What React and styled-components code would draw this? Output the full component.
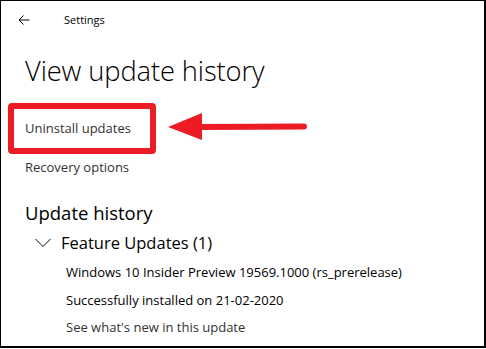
import React from "react";
import styled, { createGlobalStyle } from "styled-components";

const Global = createGlobalStyle`
  html, body { margin: 0; padding: 0; background: #fff; }
  body { font-family: "Open Sans", "Noto Sans", sans-serif; color: #000; }
`;

const Frame = styled.div`
  box-sizing: border-box;
  width: 486px;
  height: 348px;
  border: 1px solid #000;
  border-right-width: 2px;
  border-bottom-width: 2px;
  background: #fff;
  overflow: hidden;
`;

const Header = styled.div`
  height: 37px;
  display: flex;
  align-items: center;
  padding-left: 17px;
  gap: 34px;
`;

const HeaderTitle = styled.span`
  font-size: 11px;
  color: #000;
  line-height: 16px;
`;

const Content = styled.div`
  padding-left: 24px;
  display: flex;
  flex-direction: column;
`;

const Title = styled.h1`
  margin: 14px 0 0;
  font-size: 27.3px;
  font-weight: 300;
  line-height: 37px;
  letter-spacing: -0.1px;
`;

const LinkText = styled.div`
  position: relative;
  font-size: 13px;
  line-height: 20px;
  color: #333;
  margin-top: ${(p) => p.$gap}px;
  align-self: flex-start;
`;

const Highlight = styled.div`
  position: absolute;
  box-sizing: border-box;
  left: -17px;
  top: -15px;
  width: 148px;
  height: 51px;
  border: 6px solid #ed1c24;
  border-radius: 4px;
`;

const Pointer = styled.svg`
  position: absolute;
  left: 141px;
  top: -7px;
`;

const Section = styled.h2`
  margin: 23px 0 0;
  font-size: 18.5px;
  font-weight: 400;
  line-height: 26px;
`;

const Group = styled.div`
  margin-top: 6px;
  display: flex;
  align-items: center;
  gap: 10px;
  padding-left: 10px;
  font-size: 16.5px;
  line-height: 22px;
`;

const Item = styled.div`
  padding-left: 41px;
  font-size: 13px;
  line-height: 20px;
  margin-top: ${(p) => p.$gap}px;
  color: ${(p) => (p.$muted ? "#333" : "#000")};
`;

const BackArrow = () => (
  <svg width="12" height="10" viewBox="0 0 12 10">
    <path d="M5.5 0.5 L1 5 L5.5 9.5 M1 5 H11.5" fill="none" stroke="#000" strokeWidth="1" />
  </svg>
);

const Chevron = () => (
  <svg width="16" height="10" viewBox="0 0 16 10">
    <path d="M0.5 1 L8 8.5 L15.5 1" fill="none" stroke="#000" strokeWidth="1" />
  </svg>
);

export default function App() {
  return (
    <>
      <Global />
      <Frame>
        <Header>
          <BackArrow />
          <HeaderTitle>Settings</HeaderTitle>
        </Header>
        <Content>
          <Title>View update history</Title>
          <LinkText $gap={29}>
            Uninstall updates
            <Highlight />
            <Pointer width="145" height="32" viewBox="0 0 145 32">
              <polygon points="2,16 36,2 36,29" fill="#ed1c24" />
              <line x1="34" y1="16" x2="138" y2="15.5" stroke="#ed1c24" strokeWidth="6" strokeLinecap="round" />
            </Pointer>
          </LinkText>
          <LinkText $gap={19}>Recovery options</LinkText>
          <Section>Update history</Section>
          <Group>
            <Chevron />
            <span>Feature Updates (1)</span>
          </Group>
          <Item $gap={8}>Windows 10 Insider Preview 19569.1000 (rs_prerelease)</Item>
          <Item $gap={8}>Successfully installed on 21-02-2020</Item>
          <Item $gap={7} $muted>See what's new in this update</Item>
        </Content>
      </Frame>
    </>
  );
}
